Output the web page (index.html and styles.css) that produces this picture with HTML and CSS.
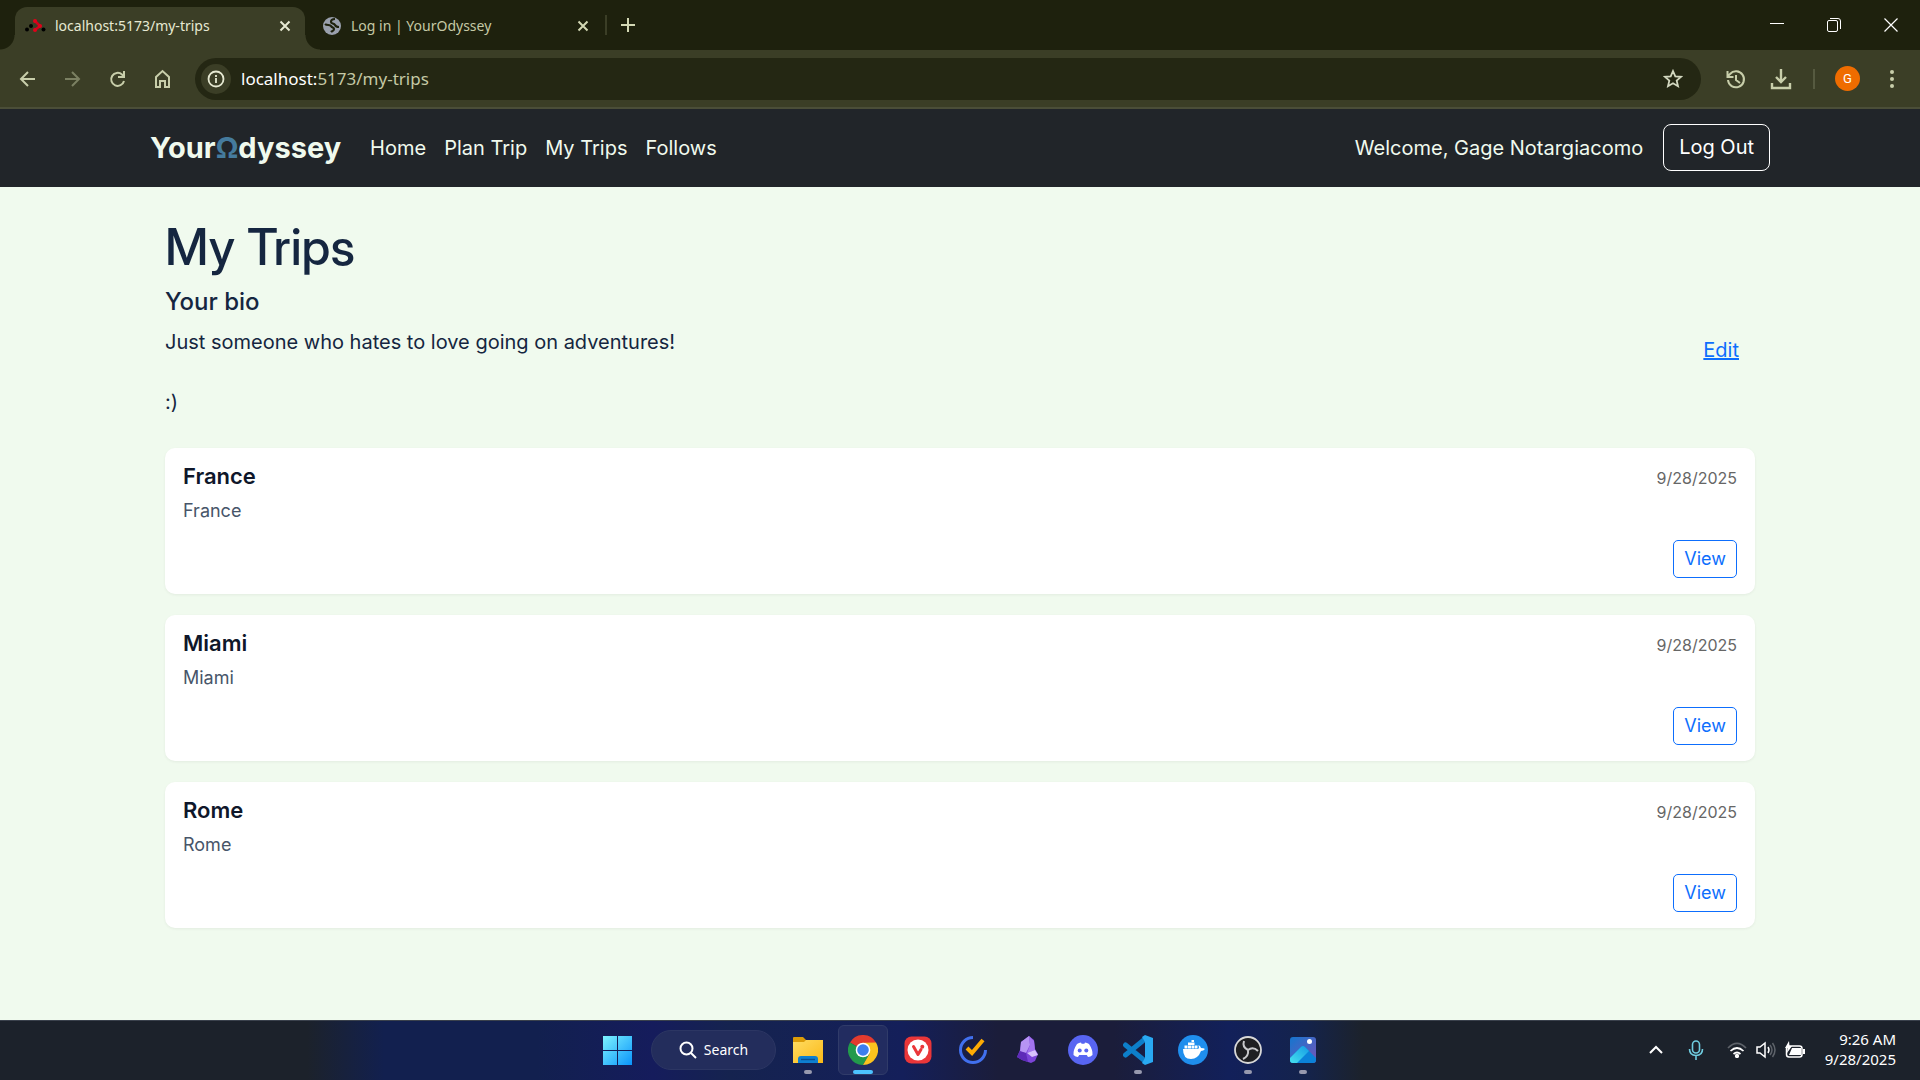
FILE: index.html
```html
<!DOCTYPE html>
<html lang="en">
<head>
<meta charset="utf-8">
<title>My Trips | YourOdyssey</title>
<meta name="viewport" content="width=device-width, initial-scale=1">
<link rel="stylesheet" href="styles.css">
</head>
<body>
<header class="browser">
  <div class="tabstrip">
    <div class="tab tab-active">
      <svg class="favicon" width="22" height="22" viewBox="0 0 22 22"><path d="M11 6l5 5-5 4" stroke="#d0021b" stroke-width="2.500" fill="none"/><g fill="#e2001a"><circle cx="11" cy="6" r="2"/><circle cx="16" cy="11" r="2"/><circle cx="11" cy="15" r="2"/></g><circle cx="7" cy="11" r="2" fill="#000"/><circle cx="3" cy="14.500" r="2" fill="#000"/><circle cx="19.500" cy="14.500" r="2" fill="#000"/></svg>
      <span class="tab-title">localhost:5173/my-trips</span>
      <button class="icon-btn tab-close" aria-label="Close tab"><svg width="12" height="12" viewBox="0 0 12 12"><path d="M1.500 1.500l9 9M10.500 1.500l-9 9" stroke="#e6e9d2" stroke-width="2"/></svg></button>
    </div>
    <div class="tab">
      <svg class="favicon" width="20" height="20" viewBox="0 0 20 20"><circle cx="10" cy="10" r="9" fill="#9aa0ad"/><path d="M3 8c2 2 5 0 6 2s3 1 3 3-2 2-3 3M13 3c-2 0-4 1-4 3s3 1 4 3 2 2 4 2" stroke="#1e210d" stroke-width="2.200" fill="none"/></svg>
      <span class="tab-title">Log in | YourOdyssey</span>
      <button class="icon-btn tab-close" aria-label="Close tab"><svg width="12" height="12" viewBox="0 0 12 12"><path d="M1.500 1.500l9 9M10.500 1.500l-9 9" stroke="#d3d8b4" stroke-width="2"/></svg></button>
    </div>
    <span class="tab-divider"></span>
    <button class="icon-btn new-tab" aria-label="New tab"><svg width="14" height="14" viewBox="0 0 14 14"><path d="M7 0v14M0 7h14" stroke="#d3d8b4" stroke-width="2"/></svg></button>
    <div class="window-controls">
      <button class="icon-btn win-btn" aria-label="Minimize"><svg width="14" height="14" viewBox="0 0 14 14"><path d="M0 5.500h14" stroke="#fff"/></svg></button>
      <button class="icon-btn win-btn" aria-label="Restore"><svg width="14" height="14" viewBox="0 0 14 14" fill="none" stroke="#fff"><rect x=".5" y="2.500" width="10" height="11" rx="1.500"/><path d="M3 .5h8a2.500 2.500 0 0 1 2.500 2.500v8"/></svg></button>
      <button class="icon-btn win-btn" aria-label="Close"><svg width="14" height="14" viewBox="0 0 14 14"><path d="M.5.5l13 13M13.500.5l-13 13" stroke="#fff" stroke-width="1.200"/></svg></button>
    </div>
  </div>
  <div class="toolbar">
    <button class="icon-btn tool" aria-label="Back"><svg width="20" height="20" viewBox="0 0 20 20"><path d="M17 10H3M10 3l-7 7 7 7" stroke="#c8ceaa" stroke-width="2" fill="none"/></svg></button>
    <button class="icon-btn tool" aria-label="Forward"><svg width="20" height="20" viewBox="0 0 20 20"><path d="M2 10h14M9 3l7 7-7 7" stroke="#7b8062" stroke-width="2" fill="none"/></svg></button>
    <button class="icon-btn tool" aria-label="Reload"><svg width="20" height="20" viewBox="0 0 20 20"><path d="M16 12a6.500 6.500 0 1 1-2-6.500l2 2M16 2v6h-6" stroke="#c8ceaa" stroke-width="2" fill="none"/></svg></button>
    <button class="icon-btn tool" aria-label="Home"><svg width="20" height="20" viewBox="0 0 20 20"><path d="M3 8l6.500-6L16 8v10h-4v-6H7v6H3z" stroke="#c8ceaa" stroke-width="2" fill="none"/></svg></button>
    <div class="omnibox">
      <span class="site-info"><svg width="18" height="18" viewBox="0 0 18 18"><circle cx="9" cy="9" r="7.500" fill="none" stroke="#e6e9d2" stroke-width="1.800"/><path d="M9 8v5M9 5v2" stroke="#e6e9d2" stroke-width="1.800"/></svg></span>
      <span class="url"><span class="url-host">localhost:</span>5173/my-trips</span>
      <button class="icon-btn star" aria-label="Bookmark"><svg width="20" height="20" viewBox="0 0 20 20"><path d="M10 2l2.300 5.300 5.700.5-4.300 3.800 1.300 5.600-5-3-5 3 1.300-5.600L2 7.800l5.700-.5z" stroke="#d3d8c0" stroke-width="1.800" fill="none"/></svg></button>
    </div>
    <div class="toolbar-end">
      <button class="icon-btn tool" aria-label="History"><svg width="22" height="22" viewBox="0 0 22 22" fill="none" stroke="#c8ceaa" stroke-width="2"><path d="M3 12a8 8 0 1 0 2-6L3 8M2.500 3v6h6M11 7v5l4 3"/></svg></button>
      <button class="icon-btn tool" aria-label="Downloads"><svg width="22" height="24" viewBox="0 0 22 24" fill="none" stroke="#c8ceaa" stroke-width="2.400"><path d="M11 2v13M6 10l5 5 5-5M2 16v5h18v-5"/></svg></button>
      <span class="tool-divider"></span>
      <button class="icon-btn avatar" aria-label="Profile">G</button>
      <button class="icon-btn tool menu" aria-label="Menu"><svg width="6" height="20" viewBox="0 0 6 20" fill="#c8ceaa"><circle cx="3" cy="3" r="2"/><circle cx="3" cy="10" r="2"/><circle cx="3" cy="17" r="2"/></svg></button>
    </div>
  </div>
</header>

<nav class="navbar">
  <div class="container navbar-inner">
    <a class="brand" href="#">Your<span class="omega">Ω</span>dyssey</a>
    <a class="nav-link" href="#">Home</a>
    <a class="nav-link" href="#">Plan Trip</a>
    <a class="nav-link" href="#">My Trips</a>
    <a class="nav-link" href="#">Follows</a>
    <span class="welcome">Welcome, Gage Notargiacomo</span>
    <button class="btn-logout">Log Out</button>
  </div>
</nav>

<main class="page">
  <div class="container content">
    <h1>My Trips</h1>
    <h2>Your bio</h2>
    <div class="bio">
      <p>Just someone who hates to love going on adventures!<br><br>:)</p>
      <a class="edit" href="#">Edit</a>
    </div>
    <div class="trips">
      <article class="card">
        <div><h3>France</h3><p>France</p></div>
        <div class="card-side"><time>9/28/2025</time><button class="btn-view">View</button></div>
      </article>
      <article class="card">
        <div><h3>Miami</h3><p>Miami</p></div>
        <div class="card-side"><time>9/28/2025</time><button class="btn-view">View</button></div>
      </article>
      <article class="card">
        <div><h3>Rome</h3><p>Rome</p></div>
        <div class="card-side"><time>9/28/2025</time><button class="btn-view">View</button></div>
      </article>
    </div>
  </div>
</main>

<footer class="taskbar">
  <div class="apps">
    <button class="app" aria-label="Start"><svg width="30" height="30" viewBox="0 0 30 30"><defs><linearGradient id="win" x1="0" y1="0" x2="1" y2="1"><stop offset="0" stop-color="#7df3ff"/><stop offset="1" stop-color="#0a94fb"/></linearGradient></defs><path d="M1 1h14v14H1zM16 1h14v14H16zM1 16h14v14H1zM16 16h14v14H16z" fill="url(#win)"/></svg></button>
    <button class="search"><svg width="18" height="18" viewBox="0 0 18 18" fill="none" stroke="#fff" stroke-width="2"><circle cx="7.500" cy="7.500" r="6"/><path d="M12 12l5 5"/></svg>Search</button>
    <button class="app running" aria-label="File Explorer"><svg width="30" height="30" viewBox="0 0 30 30"><defs><linearGradient id="fold" x1="0" y1="0" x2="1" y2="1"><stop offset="0" stop-color="#ffdc62"/><stop offset="1" stop-color="#fbb917"/></linearGradient></defs><path d="M0 3q0-1 1-1h9l3 3v5H0z" fill="#dc9c08"/><path d="M0 7h11l2-2h17v23H0z" fill="url(#fold)"/><path d="M5 28v-4q0-3 3-3h14q3 0 3 3v4z" fill="#0e7fd0"/><path d="M8 24.500h14" stroke="#0a4f92" stroke-width="1.400"/></svg></button>
    <button class="app running current" aria-label="Chrome"><svg width="30" height="30" viewBox="0 0 30 30"><path d="M15 15L2 7.500A15 15 0 0 1 28 7.500z" fill="#e33b2e"/><path d="M15 15L2 7.500A15 15 0 0 0 15 30l6.500-11.200z" fill="#229a4b"/><path d="M15 7.500h13A15 15 0 0 1 15 30l6.500-11.200z" fill="#fcc31e"/><path d="M15 7.500h13L15 7z" fill="#e33b2e"/><circle cx="15" cy="15" r="7.300" fill="#fff"/><circle cx="15" cy="15" r="5.800" fill="#3d7eef"/></svg></button>
    <button class="app" aria-label="Vivaldi"><svg width="28" height="28" viewBox="0 0 28 28"><rect x=".5" y=".5" width="27" height="27" rx="7" fill="#ea3639"/><circle cx="14" cy="14" r="10.500" fill="#fff"/><path d="M9.500 10.500l4.500 8 3-5" stroke="#ea3639" stroke-width="3" stroke-linecap="round" stroke-linejoin="round" fill="none"/><circle cx="18.300" cy="10.800" r="2" fill="#ea3639"/></svg></button>
    <button class="app" aria-label="TickTick"><svg width="30" height="30" viewBox="0 0 30 30" fill="none"><path d="M15 2.500A12.500 12.500 0 1 0 27.500 15" stroke="#4170ee" stroke-width="3"/><path d="M9 13l5 5L25 5" stroke="#fdab04" stroke-width="4"/></svg></button>
    <button class="app" aria-label="Obsidian"><svg width="30" height="30" viewBox="0 0 30 30"><path d="M16 1L8 7l-1 8-3 7 5 3 9 3 4-2 3-7-3-5-1-9z" fill="#7c44d8"/><path d="M16 1L8 7l-1 10 6 1 4-8z" fill="#b794f4"/><path d="M16 1l1 9-3 8 8-3-1-9z" fill="#a274ee"/><path d="M14 18l8-3 3 5-6 2z" fill="#d8c2fb"/><path d="M13 18l-6-2-3 6 5 3 6 2z" fill="#5e2bb8"/></svg></button>
    <button class="app" aria-label="Discord"><svg width="30" height="30" viewBox="0 0 30 30"><circle cx="15" cy="15" r="15" fill="#5865f2"/><path d="M9 9q2-1.500 4-1.500l.6 1.200h2.800L17 7.500q2 0 4 1.500 4 6 3.500 11-2 2-4.500 2l-1.200-2h-7.600L10 22q-2.500 0-4.500-2Q5 15 9 9z" fill="#fff"/><circle cx="11.700" cy="15.500" r="2" fill="#5865f2"/><circle cx="18.300" cy="15.500" r="2" fill="#5865f2"/></svg></button>
    <button class="app running" aria-label="VS Code"><svg width="30" height="30" viewBox="0 0 30 30"><path d="M2.500 10L22 26M2.500 20L22 4" stroke="#0d7fca" stroke-width="5" stroke-linecap="round"/><path d="M22 0l8 3v24l-8 3-3-2 3-5V7l-3-5z" fill="#29a9f2"/></svg></button>
    <button class="app" aria-label="Docker"><svg width="30" height="30" viewBox="0 0 30 30"><circle cx="15" cy="15" r="15" fill="#1f8eed"/><path d="M5 14h15q1.500-1 .5-4 2 1 2.500 3 3 0 4 1-1.500 2-4 2-3 8-10 8-8 0-8-10zM6.500 10.500h3v3h-3zM10 10.500h3v3h-3zM13.500 10.500h3v3h-3zM17 10.500h2.500v3H17zM10 7.500h6.500v2.500H10zM13.500 5H16v2h-2.500z" fill="#fff"/></svg></button>
    <button class="app running" aria-label="OBS Studio"><svg width="30" height="30" viewBox="0 0 30 30"><circle cx="15" cy="15" r="13" fill="#1f1f22" stroke="#d8d8d8" stroke-width="1.800"/><path d="M15 15q-6-3-4-9M15 15q5-4 10 1M15 15q1 6-5 9" stroke="#c8c8cb" stroke-width="2" fill="none"/></svg></button>
    <button class="app running" aria-label="Photos"><svg width="26" height="26" viewBox="0 0 26 26"><defs><linearGradient id="pho" x1="0" y1="0" x2="1" y2="1"><stop offset="0" stop-color="#1476cf"/><stop offset="1" stop-color="#7654b8"/></linearGradient><linearGradient id="hill" x1="0" y1="1" x2="1" y2="0"><stop offset="0" stop-color="#46e1ee"/><stop offset="1" stop-color="#159be5"/></linearGradient></defs><rect width="26" height="26" rx="3" fill="url(#pho)"/><path d="M0 21l11-11q2-2 4 0l11 11v2q0 3-3 3H3q-3 0-3-3z" fill="#0b82d9"/><path d="M0 21l11-11q2-2 4 0l4 4L7 26H3q-3 0-3-3z" fill="url(#hill)"/><circle cx="19.500" cy="4.500" r="2.500" fill="#fff"/></svg></button>
  </div>
  <div class="tray">
    <svg width="14" height="10" viewBox="0 0 14 10"><path d="M1 8l6-6 6 6" stroke="#fff" stroke-width="2" fill="none"/></svg>
    <svg class="mic" width="16" height="20" viewBox="0 0 16 20" fill="none" stroke="#6fcde0" stroke-width="1.600"><rect x="4.500" y="1" width="7" height="12" rx="3.500"/><path d="M1.500 9q0 6.500 6.500 6.500T14.500 9M8 15.500V20"/></svg>
    <div class="status">
      <svg width="20" height="16" viewBox="0 0 20 16" fill="none" stroke="#fff" stroke-width="1.700"><path d="M1 6q9-9 18 0" stroke="#5d6269"/><path d="M3.500 9q6.500-6 13 0M6.500 12q3.500-3 7 0"/><circle cx="10" cy="14" r="1.300" fill="#fff"/></svg>
      <svg width="20" height="18" viewBox="0 0 20 18" fill="none" stroke="#fff" stroke-width="1.500"><path d="M1 6h3l5-4v14l-5-4H1zM12 6q2 3 0 6"/><path d="M14 4q4 5 0 10M16.500 2q5 7 0 14" stroke="#5d6269"/></svg>
      <svg width="20" height="18" viewBox="0 0 20 18"><rect x="1.500" y="5" width="15.500" height="11" rx="2.500" fill="none" stroke="#fff" stroke-width="1.500"/><path d="M7 7h9v7H4zM18 8h2v5h-2zM4 0L0 7h2.500L2 12l5-7H4.500z" fill="#fff"/></svg>
    </div>
    <div class="clock"><span>9:26 AM</span><span>9/28/2025</span></div>
  </div>
</footer>
</body>
</html>
```
FILE: styles.css
```css
* { box-sizing: border-box; }
body {
  margin: 0;
  min-height: 100vh;
  display: flex;
  flex-direction: column;
  background: #f0faee;
  color: #152640;
  font: 20px/30px Inter, sans-serif;
}
h1, h2, h3, p { margin: 0; }
button { font: inherit; cursor: pointer; }
svg { display: block; flex: none; }
.icon-btn {
  display: flex;
  align-items: center;
  justify-content: center;
  padding: 0;
  border: 0;
  background: none;
}

/* Browser chrome */
.browser { font: 14px/20px "Noto Sans", sans-serif; color: #c5c9a5; }
.tabstrip {
  display: flex;
  align-items: flex-end;
  height: 50px;
  padding-left: 15px;
  background: #1e210d;
}
.tab {
  display: flex;
  align-items: center;
  gap: 9px;
  width: 290px;
  height: 43px;
  padding: 0 16px 6px 17px;
}
.tab + .tab { width: 300px; }
.tab-active {
  position: relative;
  padding: 0 14px 6px 9px;
  border-radius: 12px 12px 0 0;
  background: #3b3e26;
  color: #e6e9d2;
}
.tab-active::before, .tab-active::after {
  content: "";
  position: absolute;
  bottom: 0;
  width: 15px;
  height: 15px;
}
.tab-active::before { right: 100%; background: radial-gradient(circle at 0 0, transparent 14px, #3b3e26 15px); }
.tab-active::after { left: 100%; background: radial-gradient(circle at 100% 0, transparent 14px, #3b3e26 15px); }
.tab-title { flex: 1; white-space: nowrap; }
.tab-divider { width: 2px; height: 20px; margin-bottom: 15px; background: #3b3e26; }
.new-tab { width: 42px; height: 50px; }
.window-controls { display: flex; margin-left: auto; padding-right: 1px; }
.win-btn { width: 57px; height: 50px; }
.toolbar {
  display: flex;
  align-items: center;
  height: 59px;
  padding: 0 16px 0 5px;
  border-bottom: 2px solid #4b4e38;
  background: #3b3e26;
}
.tool { width: 45px; height: 42px; }
.omnibox {
  flex: 1;
  display: flex;
  align-items: center;
  gap: 10px;
  height: 42px;
  margin: 0 12px 0 10px;
  padding: 0 18px 0 6px;
  border-radius: 21px;
  background: #242713;
  font-size: 17px;
  line-height: 22px;
}
.site-info {
  display: grid;
  place-items: center;
  width: 30px;
  height: 30px;
  border-radius: 50%;
  background: #3b3e26;
}
.url { flex: 1; }
.url-host { color: #fff; }
.toolbar-end { display: flex; align-items: center; }
.tool-divider { width: 2px; height: 20px; margin: 0 20px 0 10px; background: #565a40; }
.avatar {
  width: 25px;
  height: 25px;
  border-radius: 50%;
  background: #ef6c00;
  color: #fff;
  font: 13px/20px Roboto, sans-serif;
}
.menu { width: 24px; margin-left: 20px; }

/* Site */
.container { width: 100%; max-width: 1650px; margin: 0 auto; padding: 0 15px; }
.navbar { background: #212529; color: #f0faee; }
.navbar-inner { display: flex; align-items: center; height: 78px; padding-bottom: 1px; }
.brand {
  margin-right: 20px;
  color: #f0faee;
  font-size: 29px;
  font-weight: 700;
  text-decoration: none;
}
.omega { color: #457b9d; }
.nav-link { padding: 10px 9px; color: #f0faee; text-decoration: none; }
.welcome { margin-left: auto; }
.btn-logout {
  margin-left: 20px;
  padding: 8px 15px;
  border: 1px solid #fff;
  border-radius: 8px;
  background: none;
  color: #fff;
  line-height: 29px;
}
.page { flex: 1; padding: 30px 0; }
.content { padding: 0 30px; }
h1 {
  margin-bottom: 10px;
  font-family: "Inter Display", Inter, sans-serif;
  font-size: 50px;
  line-height: 60px;
  font-weight: 500;
}
h2 { margin-bottom: 10px; font-size: 24px; line-height: 30px; font-weight: 500; }
.bio { display: flex; justify-content: space-between; align-items: flex-start; padding-right: 16px; }
.edit { margin-top: 8px; color: #0d6efd; }
.trips { display: grid; gap: 21px; margin-top: 31px; }
.card {
  display: flex;
  justify-content: space-between;
  min-height: 146px;
  padding: 14px 18px 16px;
  border-radius: 10px;
  background: #fff;
  box-shadow: 0 1px 3px rgba(0, 0, 0, 0.06);
}
h3 { margin-bottom: 7px; color: #0f172a; font-size: 22px; line-height: 28px; font-weight: 600; }
.card p { color: #475569; font-size: 18px; line-height: 28px; }
.card-side { display: flex; flex-direction: column; align-items: flex-end; justify-content: space-between; }
time { color: #666; font-size: 16px; line-height: 32px; }
.btn-view {
  padding: 4px 10px;
  border: 1px solid #0d6efd;
  border-radius: 5px;
  background: none;
  color: #0d6efd;
  font-size: 18px;
  line-height: 28px;
}

/* Taskbar */
.taskbar {
  display: grid;
  grid-template-columns: 1fr auto 1fr;
  align-items: center;
  height: 60px;
  padding-bottom: 2px;
  border-top: 1px solid #3a414c;
  background: linear-gradient(90deg, #1c222b 16%, #12204f 20%, #12204f 28%, #151c5c 34%, #15234f 38%, #141f5a 47%, #1b1d3a 52%, #1b1d3a 58%, #12205a 64%, #14234c 68%, #1c222b 71%);
  color: #fff;
  font: 15px/20px "Noto Sans", sans-serif;
}
.apps { grid-column: 2; display: flex; align-items: center; gap: 5px; }
.app {
  position: relative;
  display: grid;
  place-items: center;
  width: 50px;
  height: 50px;
  padding: 0;
  border: 1px solid transparent;
  border-radius: 6px;
  background: none;
}
.running::after {
  content: "";
  position: absolute;
  bottom: 0;
  left: 50%;
  width: 8px;
  height: 4px;
  margin-left: -4px;
  border-radius: 2px;
  background: #9799ae;
}
.current { border-color: #303b69; background: #222c60; }
.current::after { width: 20px; margin-left: -10px; background: #4cc2ff; }
.search {
  display: flex;
  align-items: center;
  justify-content: center;
  gap: 7px;
  width: 125px;
  height: 40px;
  margin: 0 2px 0 4px;
  padding: 0;
  border: 1px solid #2c3663;
  border-radius: 20px;
  background: #232d5c;
  color: #fff;
  font-size: 14px;
}
.tray { display: flex; align-items: center; justify-content: flex-end; padding-right: 24px; }
.mic { margin: 0 23px 0 25px; }
.status { display: flex; align-items: center; gap: 9px; }
.clock { display: flex; flex-direction: column; width: 91px; padding-bottom: 2px; text-align: right; }
```
